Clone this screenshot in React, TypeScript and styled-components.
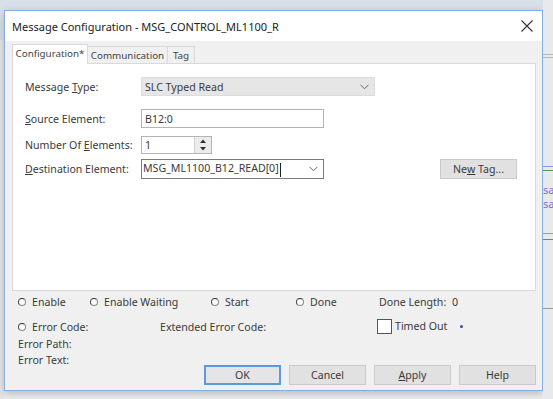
import * as React from 'react'
import styled, { createGlobalStyle, css } from 'styled-components'

const GlobalStyle = createGlobalStyle`
    html, body {
        margin: 0;
        padding: 0;
        background: #e9ecf0;
    }
    body {
        font-family: "Noto Sans", "Open Sans", sans-serif;
        font-size: 10.6px;
        color: #3a3a3a;
    }
`

const Screen = styled.div`
    width: 553px;
    height: 399px;
    overflow: hidden;
    display: flex;
    background: linear-gradient(#d7dfe9 0, #d7dfe9 10px, #eceef0 10px);
`

const LeftStrip = styled.div`
    width: 4px;
    flex-shrink: 0;
    background: linear-gradient(#d7dfe9 0, #d7dfe9 40px, #e4e6e8 40px);
`

const RightStrip = styled.div`
    flex: 1;
    display: flex;
    flex-direction: column;
    padding-top: 54px;
    background: #e8e9eb;
    overflow: hidden;
`

const StripLine = styled.div<{ color: string; gap: number }>`
    height: 1px;
    margin-top: ${p => p.gap}px;
    background: ${p => p.color};
`

const StripText = styled.div<{ gap: number }>`
    margin-top: ${p => p.gap}px;
    color: #6f74d8;
    font-size: 11px;
    line-height: 14px;
    white-space: nowrap;
`

const Dialog = styled.div`
    margin-top: 10px;
    width: 537px;
    height: 379px;
    flex-shrink: 0;
    border: 1px solid #86aee0;
    background: #f0f0f0;
    box-shadow: 0 3px 8px rgba(0, 0, 0, 0.22);
    display: flex;
    flex-direction: column;
`

const TitleBar = styled.div`
    height: 30px;
    background: #fff;
    display: flex;
    align-items: center;
    justify-content: space-between;
    padding: 0 9px 0 7px;
    flex-shrink: 0;
`

const Title = styled.div`
    font-size: 11px;
    color: #222;
`

const Body = styled.div`
    flex: 1;
    display: flex;
    flex-direction: column;
    padding: 0 6px 0 7px;
`

const TabStrip = styled.div`
    height: 22px;
    display: flex;
    align-items: flex-end;
    padding-left: 1px;
`

const Tab = styled.div<{ active?: boolean; width: number }>`
    width: ${p => p.width}px;
    height: 17px;
    box-sizing: border-box;
    display: flex;
    align-items: center;
    justify-content: center;
    border: 1px solid #d9d9d9;
    border-bottom: none;
    margin-left: -1px;
    background: #f0f0f0;
    color: #444;
    font-size: 9.8px;
    white-space: nowrap;
    ${p => p.active && css`
        height: 20px;
        background: #fff;
        position: relative;
        z-index: 1;
        margin-bottom: -1px;
        padding-bottom: 2px;
    `}
`

const Panel = styled.div`
    height: 228px;
    box-sizing: border-box;
    background: #fff;
    border: 1px solid #d9d9d9;
    display: flex;
    flex-direction: column;
    padding: 13px 18px 0 12px;
`

const FieldRow = styled.div<{ gap: number }>`
    display: flex;
    align-items: center;
    margin-top: ${p => p.gap}px;
`

const Label = styled.div`
    width: 116px;
    flex-shrink: 0;
`

const Mn = styled.span`
    text-decoration: underline;
    text-underline-offset: 1px;
`

const Combo = styled.div<{ width: number; editable?: boolean }>`
    width: ${p => p.width}px;
    height: ${p => (p.editable ? 20 : 19)}px;
    box-sizing: border-box;
    display: flex;
    align-items: center;
    justify-content: space-between;
    padding: 0 5px 0 3px;
    ${p => p.editable
        ? css`
            background: #fff;
            border: 1px solid #7a7a7a;
            padding-left: 1px;
        `
        : css`
            background: #e6e6e6;
            border: 1px solid #dcdcdc;
        `}
`

const TextBox = styled.div<{ width: number }>`
    width: ${p => p.width}px;
    height: 19px;
    box-sizing: border-box;
    border: 1px solid #b4b4b4;
    background: #fff;
    display: flex;
    align-items: center;
    padding-left: 3px;
`

const Spinner = styled.div`
    width: 71px;
    height: 18px;
    box-sizing: border-box;
    border: 1px solid #b4b4b4;
    background: #fff;
    display: flex;
    align-items: stretch;
`

const SpinValue = styled.div`
    flex: 1;
    display: flex;
    align-items: center;
    padding-left: 3px;
`

const SpinButtons = styled.div`
    width: 16px;
    display: flex;
    flex-direction: column;
    border-left: 1px solid #d0d0d0;
    background: #ececec;
`

const SpinHalf = styled.div`
    flex: 1;
    display: flex;
    align-items: center;
    justify-content: center;
`

const Caret = styled.span`
    display: inline-block;
    width: 1px;
    height: 14px;
    background: #222;
    margin-left: 1px;
    vertical-align: middle;
`

const PushButton = styled.div<{ focused?: boolean }>`
    width: 77px;
    height: 20px;
    box-sizing: border-box;
    background: #e1e1e1;
    border: 1px solid #cacaca;
    display: flex;
    align-items: center;
    justify-content: center;
    ${p => p.focused && css`
        border: 2px solid #5a9ad9;
        background: #e5e5e5;
    `}
`

const NewTagButton = styled(PushButton)`
    margin-left: auto;
`

const Status = styled.div`
    display: flex;
    flex-direction: column;
    padding-left: 6px;
`

const StatusRow = styled.div<{ cols: string; gap: number }>`
    display: grid;
    grid-template-columns: ${p => p.cols};
    align-items: center;
    height: 14px;
    margin-top: ${p => p.gap}px;
`

const Radio = styled.span`
    display: inline-block;
    width: 6px;
    height: 6px;
    border-radius: 50%;
    border: 1px solid #8a8a8a;
    border-top-color: #333;
    border-left-color: #444;
    background: #fafafa;
    margin-right: 6px;
    vertical-align: 0px;
`

const Item = styled.div`
    white-space: nowrap;
`

const Check = styled.span`
    display: inline-block;
    width: 13px;
    height: 13px;
    border: 1px solid #555;
    background: #fff;
    margin-right: 3px;
    vertical-align: -4px;
`

const Dot = styled.span`
    display: inline-block;
    width: 3px;
    height: 3px;
    border-radius: 50%;
    background: #2f45c8;
    margin-left: 13px;
    vertical-align: 2px;
`

const Lower = styled.div`
    display: flex;
    align-items: flex-start;
    margin-top: 4px;
`

const ErrorLines = styled.div`
    width: 188px;
    display: flex;
    flex-direction: column;
    gap: 2px;
    line-height: 14px;
`

const ButtonBar = styled.div`
    display: flex;
    gap: 8px;
    margin-top: 28px;
`

const Chevron = () => (
    <svg width="9" height="6" viewBox="0 0 9 6">
        <path d="M0.5 0.8 L4.5 4.8 L8.5 0.8" fill="none" stroke="#666" strokeWidth="1" />
    </svg>
)

const SpinArrow = ({ up }: { up?: boolean }) => (
    <svg width="6" height="4" viewBox="0 0 6 4">
        <path d={up ? 'M0 4 L3 0.5 L6 4 Z' : 'M0 0 L3 3.5 L6 0 Z'} fill="#333" />
    </svg>
)

const CloseIcon = () => (
    <svg width="12" height="12" viewBox="0 0 12 12">
        <path d="M0.5 0.5 L11.5 11.5 M11.5 0.5 L0.5 11.5" stroke="#333" strokeWidth="1.1" />
    </svg>
)

export default function App() {
    return (
        <>
            <GlobalStyle />
            <Screen>
                <LeftStrip />
                <Dialog>
                    <TitleBar>
                        <Title>Message Configuration - MSG_CONTROL_ML1100_R</Title>
                        <CloseIcon />
                    </TitleBar>
                    <Body>
                        <TabStrip>
                            <Tab active width={76}>Configuration*</Tab>
                            <Tab width={81}>Communication</Tab>
                            <Tab width={28}>Tag</Tab>
                        </TabStrip>
                        <Panel>
                            <FieldRow gap={0}>
                                <Label>Message <Mn>T</Mn>ype:</Label>
                                <Combo width={234}>
                                    <span>SLC Typed Read</span>
                                    <Chevron />
                                </Combo>
                            </FieldRow>
                            <FieldRow gap={13}>
                                <Label><Mn>S</Mn>ource Element:</Label>
                                <TextBox width={183}>B12:0</TextBox>
                            </FieldRow>
                            <FieldRow gap={8}>
                                <Label>Number Of <Mn>E</Mn>lements:</Label>
                                <Spinner>
                                    <SpinValue>1</SpinValue>
                                    <SpinButtons>
                                        <SpinHalf><SpinArrow up /></SpinHalf>
                                        <SpinHalf><SpinArrow /></SpinHalf>
                                    </SpinButtons>
                                </Spinner>
                            </FieldRow>
                            <FieldRow gap={5}>
                                <Label><Mn>D</Mn>estination Element:</Label>
                                <Combo width={183} editable>
                                    <span>MSG_ML1100_B12_READ[0]<Caret /></span>
                                    <Chevron />
                                </Combo>
                                <NewTagButton>Ne<Mn>w</Mn>&nbsp;Tag...</NewTagButton>
                            </FieldRow>
                        </Panel>
                        <Status>
                            <StatusRow cols="72px 121px 85px 83px 73px 1fr" gap={4}>
                                <Item><Radio />Enable</Item>
                                <Item><Radio />Enable Waiting</Item>
                                <Item><Radio />Start</Item>
                                <Item><Radio />Done</Item>
                                <Item>Done Length:</Item>
                                <Item>0</Item>
                            </StatusRow>
                            <StatusRow cols="142px 217px 1fr" gap={10}>
                                <Item><Radio />Error Code:</Item>
                                <Item>Extended Error Code:</Item>
                                <Item><Check />Timed Out<Dot /></Item>
                            </StatusRow>
                            <Lower>
                                <ErrorLines>
                                    <Item>Error Path:</Item>
                                    <Item>Error Text:</Item>
                                </ErrorLines>
                                <ButtonBar>
                                    <PushButton focused>OK</PushButton>
                                    <PushButton>Cancel</PushButton>
                                    <PushButton><Mn>A</Mn>pply</PushButton>
                                    <PushButton>Help</PushButton>
                                </ButtonBar>
                            </Lower>
                        </Status>
                    </Body>
                </Dialog>
                <RightStrip>
                    <StripLine color="#b8b8b8" gap={0} />
                    <StripLine color="#b8b8b8" gap={2} />
                    <StripLine color="#8f95e0" gap={108} />
                    <StripLine color="#5f8f5f" gap={3} />
                    <StripText gap={12}>sa</StripText>
                    <StripText gap={0}>sa</StripText>
                    <StripLine color="#8f95e0" gap={22} />
                    <StripLine color="#5f8f5f" gap={5} />
                    <StripLine color="#9a9a9a" gap={68} />
                </RightStrip>
            </Screen>
        </>
    )
}
